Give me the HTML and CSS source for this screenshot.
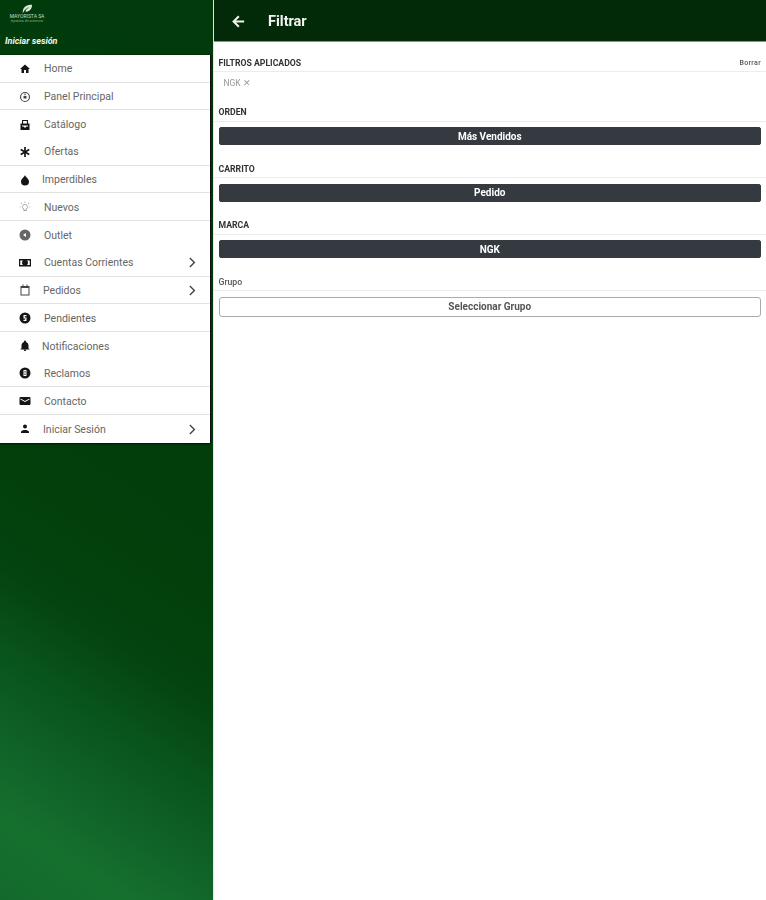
FILE: index.html
```html
<!DOCTYPE html>
<html lang="es">
<head>
<meta charset="utf-8">
<title>Filtrar</title>
<link rel="stylesheet" href="styles.css">
</head>
<body>
<div class="app">
  <aside class="side">
    <header class="side-head">
      <div class="logo">
        <svg class="logo-leaf" viewBox="0 0 14 12" width="12" height="10"><path fill="#d8ead2" d="M2 11C1 5 6 0 13 1c0 6-4 9-8 8 1-3 3-4 5-5-3 0-6 3-8 7z"/></svg>
        <span class="logo-name">MAYORISTA SA</span>
        <span class="logo-sub">repuestos del automotor</span>
      </div>
      <div class="login-hint">Iniciar sesión</div>
    </header>
    <nav class="menu">
      <a class="item line"><svg viewBox="0 0 24 24"><path d="M10 20v-6h4v6h5v-8h3L12 3 2 12h3v8z"/></svg><span>Home</span></a>
      <a class="item line"><svg class="mid" viewBox="0 0 24 24"><path fill-rule="evenodd" d="M12 2a10 10 0 1 0 0 20 10 10 0 0 0 0-20zm0 2.200a7.800 7.800 0 1 1 0 15.600 7.800 7.800 0 0 1 0-15.600z"/><path d="M10.800 5.500h2.400v3h-2.400zM9 10h6v5H9z"/></svg><span>Panel Principal</span></a>
      <a class="item"><svg viewBox="0 0 24 24"><path fill-rule="evenodd" d="M6 2h12v7h3v13H3V9h3zm2.200 2.200V9h7.600V4.200zM6 13v2h3.500l1 2h3l1-2H18v-2z"/></svg><span>Catálogo</span></a>
      <a class="item line"><svg viewBox="0 0 24 24"><path d="M10.300 2h3.400v7l6-3.500 1.700 3-6 3.500 6 3.500-1.700 3-6-3.500v7h-3.400v-7l-6 3.500-1.700-3 6-3.500-6-3.500 1.700-3 6 3.500z"/></svg><span>Ofertas</span></a>
      <a class="item line tighter"><svg viewBox="0 0 24 24"><path d="M12 2c1 4 8 8 8 13a8 8 0 0 1-16 0c0-5 7-9 8-13z"/></svg><span>Imperdibles</span></a>
      <a class="item line"><svg class="pale" viewBox="0 0 24 24"><path d="M12 6a6 6 0 0 0-3 11v3h6v-3a6 6 0 0 0-3-11zm1.500 9.900V18h-3v-2.100a4.300 4.300 0 1 1 3 0zM11.300 1h1.400v3h-1.400zM1 11.300h3v1.400H1zM20 11.300h3v1.400h-3zM4.300 3.300l2 2-1 1-2-2zM19.700 3.300l1 1-2 2-1-1z"/></svg><span>Nuevos</span></a>
      <a class="item"><svg class="grey" viewBox="0 0 24 24"><path fill-rule="evenodd" d="M12 1a11 11 0 1 0 0 22 11 11 0 0 0 0-22zm2 7v8l-6-4z"/></svg><span>Outlet</span></a>
      <a class="item line"><svg viewBox="0 0 24 24"><path fill-rule="evenodd" d="M0 4h24v15H0zm2.500 3v9h5.500a6 6 0 0 1 0-9zm13.500 0a6 6 0 0 1 0 9h5.500V7z"/></svg><span>Cuentas Corrientes</span><svg class="chev" viewBox="0 0 24 24"><path d="M8.600 4 7 5.600 13.400 12 7 18.400 8.600 20l8-8z"/></svg></a>
      <a class="item line tight"><svg class="mid" viewBox="0 0 24 24"><path fill-rule="evenodd" d="M7 1h2v3h6V1h2v3h4v19H3V4h4zM5 8v13h14V8z"/></svg><span>Pedidos</span><svg class="chev" viewBox="0 0 24 24"><path d="M8.600 4 7 5.600 13.400 12 7 18.400 8.600 20l8-8z"/></svg></a>
      <a class="item line"><svg viewBox="0 0 24 24"><path fill-rule="evenodd" d="M12 1a11 11 0 1 0 0 22 11 11 0 0 0 0-22zM9 6h6v2.500h-3.500V11H15v7H9v-2.500h3.500V13H9z"/></svg><span>Pendientes</span></a>
      <a class="item tighter"><svg viewBox="0 0 24 24"><path d="M12 22a2.500 2.500 0 0 0 2.500-2.500h-5A2.500 2.500 0 0 0 12 22zm7-5v-6c0-3.500-2-6-5-6.800V3a2 2 0 1 0-4 0v1.200C7 5 5 7.500 5 11v6l-2 1v1h18v-1z"/></svg><span>Notificaciones</span></a>
      <a class="item line"><svg viewBox="0 0 24 24"><path fill-rule="evenodd" d="M12 1a11 11 0 1 0 0 22 11 11 0 0 0 0-22zM9 6h6v12H9zm2 2v3h2V8zm0 5v3h2v-3z"/></svg><span>Reclamos</span></a>
      <a class="item line"><svg viewBox="0 0 24 24"><path d="M21 4H3a2 2 0 0 0-2 2v12a2 2 0 0 0 2 2h18a2 2 0 0 0 2-2V6a2 2 0 0 0-2-2zm0 5-9 5-9-5V7l9 5 9-5z"/></svg><span>Contacto</span></a>
      <a class="item tight"><svg viewBox="0 0 24 24"><path d="M12 11a4 4 0 1 0 0-8 4 4 0 0 0 0 8zm0 3c-2.700 0-8 1.300-8 4v2h16v-2c0-2.700-5.300-4-8-4z"/></svg><span>Iniciar Sesión</span><svg class="chev" viewBox="0 0 24 24"><path d="M8.600 4 7 5.600 13.400 12 7 18.400 8.600 20l8-8z"/></svg></a>
    </nav>
  </aside>
  <main class="main">
    <header class="bar">
      <svg class="back" viewBox="0 0 24 24"><path d="M20 10.500H8.500l5-5L11.500 3.500 3 12l8.500 8.500 2-2-5-5H20z"/></svg>
      <h1>Filtrar</h1>
    </header>
    <div class="content">
      <section class="group first">
        <div class="group-head"><span>FILTROS APLICADOS</span><a class="clear">Borrar</a></div>
        <div class="chips"><span class="chip">NGK ✕</span></div>
      </section>
      <section class="group">
        <div class="group-head"><span>ORDEN</span></div>
        <button class="btn dark">Más Vendidos</button>
      </section>
      <section class="group">
        <div class="group-head"><span>CARRITO</span></div>
        <button class="btn dark">Pedido</button>
      </section>
      <section class="group">
        <div class="group-head"><span>MARCA</span></div>
        <button class="btn dark">NGK</button>
      </section>
      <section class="group">
        <div class="group-head"><span class="soft">Grupo</span></div>
        <button class="btn outline">Seleccionar Grupo</button>
      </section>
    </div>
  </main>
</div>
</body>
</html>
```
FILE: styles.css
```css
* { box-sizing: border-box; }
html, body { margin: 0; height: 100%; }
body { font-family: Roboto, "Liberation Sans", sans-serif; background: #fff; overflow: hidden; }
.app { display: flex; height: 900px; overflow: hidden; filter: blur(.35px); }

.side {
  width: 214px;
  flex: none;
  background: linear-gradient(33deg, #13692c 0%, #15702e 8%, #11652a 14%, #09541d 24%, #044410 32%, #023f0b 42%, #023a0b 100%);
  border-right: 1px solid #dfe7df;
}
.side-head { height: 55px; padding: 4px 0 0 5px; display: flex; flex-direction: column; color: #fff; }
.logo { height: 29px; width: 44px; display: flex; flex-direction: column; align-items: center; }
.logo-leaf { display: block; }
.logo-name { font-size: 5px; line-height: 5px; color: #c5dcc2; white-space: nowrap; }
.logo-sub { font-size: 3px; line-height: 4px; color: #7fa884; white-space: nowrap; }
.login-hint { margin-top: 2px; font-size: 9px; font-weight: 700; font-style: italic; color: #f1f5ef; line-height: 12px; }

.menu { width: 210px; background: #fff; box-shadow: 1px 0 1px #111, 0 1px 2px rgba(0,0,0,.6); }
.item { display: flex; align-items: center; height: 27.700px; padding: 1px 10px 0 19px; color: #666; font-size: 10.500px; }
.item.line { border-bottom: 1px solid #e2e2e2; }
.item svg:first-child { width: 12px; height: 12px; flex: none; margin-right: 13px; fill: #151515; }
.item.tight svg:first-child { margin-right: 12px; }
.item.tighter svg:first-child { margin-right: 11px; }
.item svg.pale { fill: #999; }
.item svg.grey { fill: #666; }
.item svg.mid { fill: #444; }
.item span { flex: 1; white-space: nowrap; }
.chev { width: 15px; height: 15px; flex: none; fill: #444; }

.main { flex: 1; min-width: 0; display: flex; flex-direction: column; }
.bar { height: 42px; flex: none; display: flex; align-items: center; padding: 1px 0 0 16px; background: #022a08; border-bottom: 1px solid #8a968b; color: #fff; }
.back { width: 17px; height: 17px; fill: #eef3ee; margin-right: 21px; }
.bar h1 { margin: 0; font-size: 14.500px; font-weight: 700; color: #f2f4f2; }

.content { padding: 0 5px 0 4.500px; }
.group { padding-top: 14px; }
.group.first { padding-top: 11px; }
.group-head { display: flex; justify-content: space-between; align-items: flex-end; height: 19px; padding: 0 5px 3.500px 4.500px; margin: 0 -5px 0 -4.500px; border-bottom: 1px solid #ececec; font-size: 8.700px; font-weight: 700; color: #333; line-height: 10px; }
.group-head .soft { font-weight: 500; color: #555; }
.clear { font-size: 7px; letter-spacing: .35px; color: #555; font-weight: 500; }
.chips { height: 16.500px; padding: 5px 0 0 5px; }
.chip { font-size: 8.500px; color: #999; line-height: 12px; display: block; }
.btn { display: block; width: 100%; height: 18px; margin-top: 5.500px; padding: 1px 0 0; border-radius: 2px; font: 700 10px/1 Roboto, "Liberation Sans", sans-serif; }
.btn.dark { background: #343a40; border: 1px solid #343a40; color: #fff; }
.btn.outline { height: 20px; background: #fff; border: 1px solid #aaa; color: #555; font-weight: 700; border-radius: 3px; }
```
